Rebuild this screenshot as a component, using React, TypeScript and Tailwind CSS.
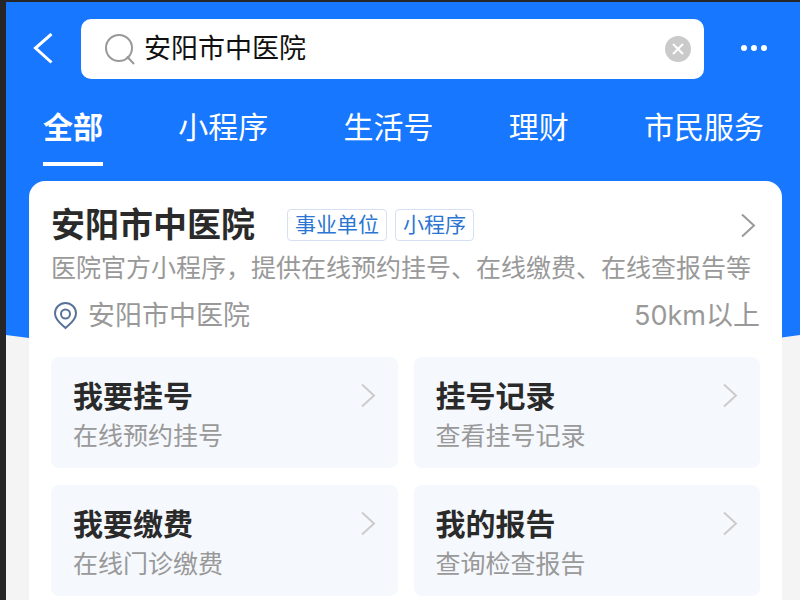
import { useState } from "react";

const tabs = ["全部", "小程序", "生活号", "理财", "市民服务"];

const tags = ["事业单位", "小程序"];

const services = [
    { title: "我要挂号", desc: "在线预约挂号" },
    { title: "挂号记录", desc: "查看挂号记录" },
    { title: "我要缴费", desc: "在线门诊缴费" },
    { title: "我的报告", desc: "查询检查报告" },
];

function Chevron({ className }: { className: string }) {
    return (
        <svg className={className} width="15" height="25" viewBox="0 0 15 25" fill="none" stroke="currentColor" strokeWidth="2">
            <path d="M1 1.5 13 12.5 1 23.5" />
        </svg>
    );
}

export default function App() {
    const [query, setQuery] = useState("安阳市中医院");
    const [active, setActive] = useState("全部");

    return (
        <div className="flex min-h-screen flex-col border-t-2 border-l-6 border-[#262626] bg-[#f4f4f4] font-['Inter','Noto_Sans_CJK_SC',sans-serif]">
            <header>
                <div className="h-[333px] bg-[#1777ff] pt-[17px]">
                    {/* Search bar */}
                    <div className="flex items-center pr-8 pl-[26px]">
                        <button type="button" aria-label="返回" className="text-white">
                            <svg width="22" height="32" viewBox="0 0 22 32" fill="none" stroke="currentColor" strokeWidth="3">
                                <path d="M19.5 1 3.5 15 19.5 29.5" />
                            </svg>
                        </button>
                        <div className="ml-[27px] flex h-[60px] flex-1 items-center rounded-[10px] bg-white pr-3 pl-6">
                            <svg width="31" height="32" viewBox="0 0 31 32" fill="none" stroke="#999" strokeWidth="2" className="shrink-0">
                                <circle cx="14" cy="15" r="13" />
                                <path d="M22 23.5 29 31" />
                            </svg>
                            <input
                                aria-label="搜索"
                                value={query}
                                onChange={(e) => setQuery(e.target.value)}
                                className="ml-2 h-10 min-w-0 flex-1 bg-transparent text-[27px] text-[#111] outline-none"
                            />
                            <button type="button" aria-label="清除" onClick={() => setQuery("")}>
                                <svg width="28" height="28" viewBox="0 0 28 28">
                                    <circle cx="14" cy="14" r="13" fill="#cacaca" />
                                    <path d="M9 9 19 19M19 9 9 19" stroke="#fff" strokeWidth="2" />
                                </svg>
                            </button>
                        </div>
                        <button type="button" aria-label="更多" className="ml-9 text-white">
                            <svg width="28" height="8" viewBox="0 0 28 8" fill="currentColor">
                                <circle cx="4" cy="3" r="3" />
                                <circle cx="14" cy="3" r="3" />
                                <circle cx="24" cy="3" r="3" />
                            </svg>
                        </button>
                    </div>

                    {/* Tabs */}
                    <nav className="mt-[30px] flex justify-between pr-9 pl-[37px]">
                        {tabs.map((tab) => (
                            <button
                                key={tab}
                                type="button"
                                onClick={() => setActive(tab)}
                                className={`border-b-4 pb-[17px] text-[30px] leading-9 text-white ${
                                    active === tab ? "border-white font-bold" : "border-transparent font-normal"
                                }`}
                            >
                                {tab}
                            </button>
                        ))}
                    </nav>
                </div>
                <svg className="block w-full" height="28" viewBox="0 0 800 28" preserveAspectRatio="none">
                    <path d="M0 0Q400 56 800 0Z" fill="#1777ff" />
                </svg>
            </header>

            {/* Result card */}
            <main className="relative -mt-[182px] mr-[18px] ml-[23px] flex-1 rounded-t-[16px] bg-white px-[22px] pt-6">
                <div className="flex h-10 items-center">
                    <h1 className="text-[34px] leading-10 font-bold text-[#2a2a2a]">安阳市中医院</h1>
                    <div className="ml-8 flex gap-2">
                        {tags.map((tag) => (
                            <span key={tag} className="rounded-sm border border-[#d5e0f2] px-[7px] text-[21px] leading-[30px] text-[#2b76d2]">
                                {tag}
                            </span>
                        ))}
                    </div>
                    <Chevron className="mr-1 ml-auto text-[#999]" />
                </div>
                <p className="mt-[7px] text-[25px] leading-8 whitespace-nowrap text-[#999]">
                    医院官方小程序，提供在线预约挂号、在线缴费、在线查报告等
                </p>
                <div className="mt-4 flex items-center text-[27px] leading-8 text-[#999]">
                    <svg width="28" height="28" viewBox="0 0 28 28" fill="none" stroke="#587397" strokeWidth="2">
                        <path d="M14.5 26C12 23.5 4 18.5 4 11.5a10.5 10.5 0 0 1 21 0C25 18.5 17 23.5 14.5 26Z" />
                        <circle cx="14.5" cy="12" r="4.5" />
                    </svg>
                    <span className="ml-[9px]">安阳市中医院</span>
                    <span className="ml-auto">50km以上</span>
                </div>

                {/* Services */}
                <div className="mt-[25px] grid grid-cols-2 gap-x-4 gap-y-[17px]">
                    {services.map((s) => (
                        <a key={s.title} href="#" className="flex items-start rounded-lg bg-[#f5f8fd] pt-[21px] pr-[22px] pb-4 pl-[22px]">
                            <div>
                                <h2 className="text-[30px] leading-9 font-bold text-[#2a2a2a]">{s.title}</h2>
                                <p className="mt-[6px] text-[25px] leading-8 text-[#999]">{s.desc}</p>
                            </div>
                            <Chevron className="mt-[5px] ml-auto text-[#ccc]" />
                        </a>
                    ))}
                </div>
            </main>
        </div>
    );
}
